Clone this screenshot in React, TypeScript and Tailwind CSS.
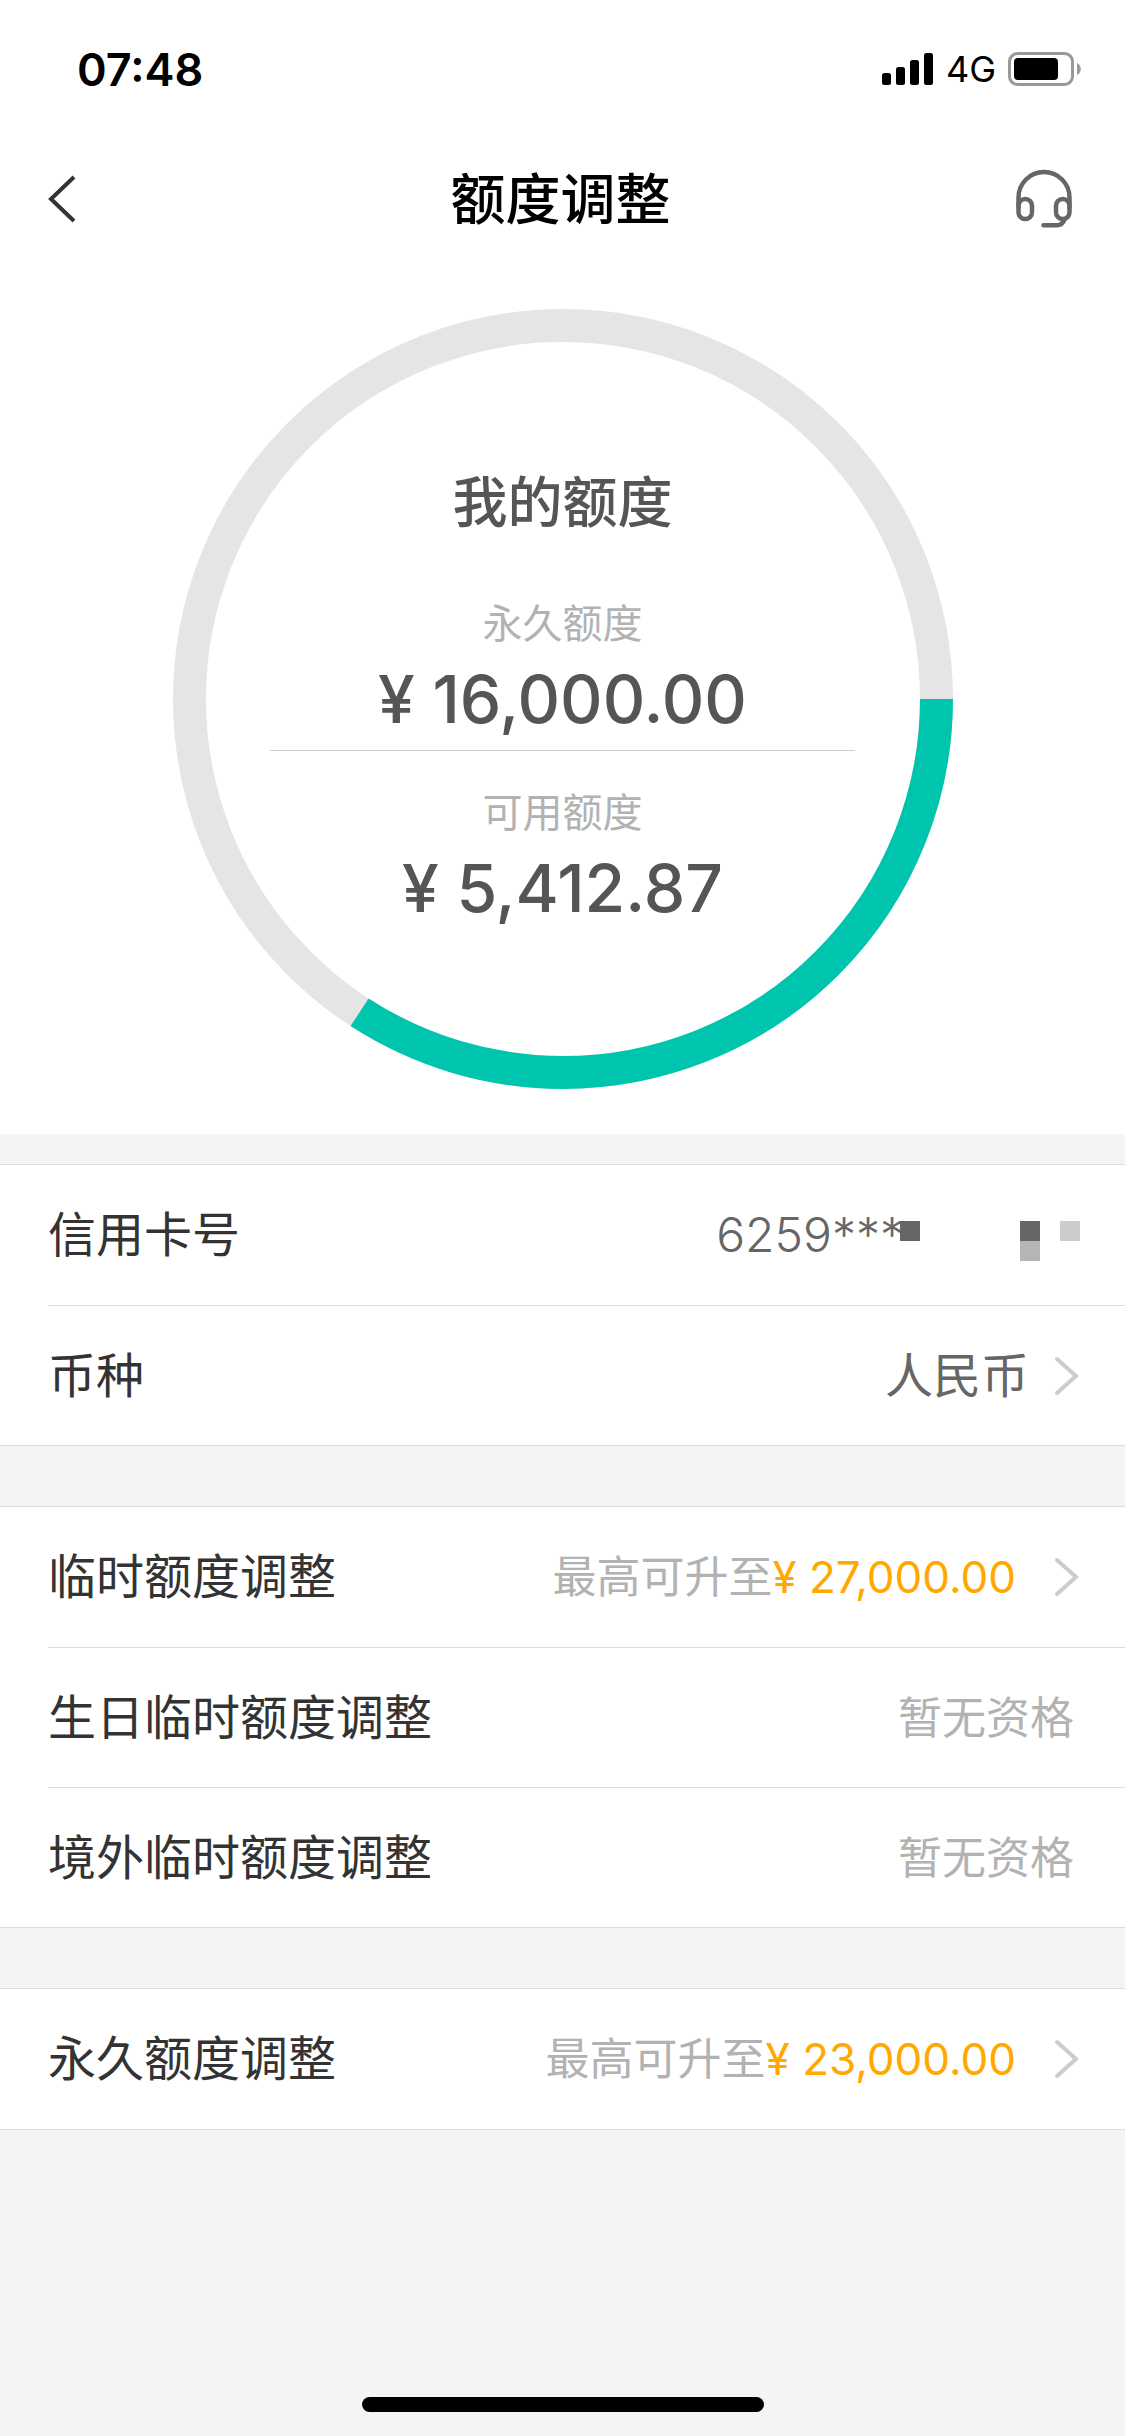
import type { ReactNode } from "react";

const mosaic = [
  "", "", "", "", "", "", "", "", "",
  "bg-[#666]", "", "", "", "", "", "bg-[#666]", "", "bg-[#ccc]",
  "", "", "", "", "", "", "bg-[#b5b5b5]", "", "",
];

const StatusBar = () => {
  return (
    <div className="flex h-[138px] items-center justify-between pr-[43px] pl-[77px] text-black">
      <span className="text-[45px] leading-none font-semibold">07:48</span>
      <div className="flex items-center gap-3">
        <svg width="52" height="34" viewBox="0 0 52 34" aria-hidden="true">
          <rect x="0" y="21" width="9" height="12" rx="2.5" />
          <rect x="14" y="15" width="9" height="18" rx="2.5" />
          <rect x="28" y="8" width="9" height="25" rx="2.5" />
          <rect x="42" y="1" width="9" height="32" rx="2.5" />
        </svg>
        <span className="text-[36px] leading-none">4G</span>
        <svg width="74" height="34" viewBox="0 0 74 34" aria-hidden="true">
          <rect
            x="1.5"
            y="1.5"
            width="63"
            height="31"
            rx="8"
            fill="none"
            stroke="#999"
            strokeWidth="3"
          />
          <rect x="6" y="6" width="44" height="22" rx="4" />
          <path d="M69 11c5 2 5 10 0 12z" fill="#999" />
        </svg>
      </div>
    </div>
  );
};

const Header = () => {
  return (
    <header className="flex h-[122px] items-center justify-between pr-[52px] pl-[48px]">
      <button type="button" aria-label="返回" className="w-[57px]">
        <svg width="30" height="50" viewBox="0 0 30 50" fill="none">
          <path d="M26 3 3 25l23 22" stroke="#333" strokeWidth="4" />
        </svg>
      </button>
      <h1 className="text-[55px] leading-none font-medium text-black">
        额度调整
      </h1>
      <button type="button" aria-label="客服">
        <svg
          width="57"
          height="60"
          viewBox="16 18 57 60"
          fill="none"
          stroke="#666"
          strokeWidth="4.5"
          strokeLinecap="round"
        >
          <path d="M18.5 56v-9.5a25.5 25.5 0 0 1 51 0V56" />
          <rect x="18.5" y="48" width="13.5" height="20" rx="6.7" />
          <rect x="56" y="48" width="13.5" height="20" rx="6.7" />
          <path d="M43.5 74.3H57q5.5 0 7.5-6" />
        </svg>
      </button>
    </header>
  );
};

const LimitRing = () => {
  return (
    <section className="grid justify-center pt-[49px] pb-[45px]">
      <svg
        className="col-start-1 row-start-1 w-[780px] max-w-full"
        viewBox="0 0 780 780"
        fill="none"
        strokeWidth="33"
        aria-hidden="true"
      >
        <circle cx="390" cy="390" r="373.5" stroke="#e5e5e5" />
        <circle
          cx="390"
          cy="390"
          r="373.5"
          stroke="#00c5ae"
          pathLength="360"
          strokeDasharray="123 360"
        />
      </svg>
      <div className="col-start-1 row-start-1 flex flex-col items-center pt-[166px] text-[#555]">
        <h2 className="text-[55px] leading-[54px] font-medium">我的额度</h2>
        <p className="mt-[75px] text-[40px] leading-[40px] text-[#b2b2b2]">
          永久额度
        </p>
        <p className="mt-5 text-[66px] leading-[70px] font-medium">
          ¥ 16,000.00
        </p>
        <hr className="mt-4 w-3/4 border-[#ccc]" />
        <p className="mt-[42px] text-[40px] leading-[40px] text-[#b2b2b2]">
          可用额度
        </p>
        <p className="mt-5 text-[66px] leading-[70px] font-medium">
          ¥ 5,412.87
        </p>
      </div>
    </section>
  );
};

const ArrowIcon = () => {
  return (
    <svg width="26" height="40" viewBox="0 0 26 40" fill="none" aria-hidden="true">
      <path
        d="M3 3l19 17L3 37"
        stroke="#ccc"
        strokeWidth="4"
        strokeLinecap="round"
      />
    </svg>
  );
};

const Group = ({ children }: { children: ReactNode }) => {
  return (
    <ul className="border-y border-[#dcdcdc] bg-white pl-12">{children}</ul>
  );
};

type RowProps = {
  label: string;
  link?: boolean;
  children: ReactNode;
};

const Row = ({ label, link, children }: RowProps) => {
  const content = (
    <>
      <span className="text-[48px] text-[#333]">{label}</span>
      <span className="flex items-center">{children}</span>
    </>
  );

  return (
    <li className="h-[140px] border-t border-[#dcdcdc] pr-[45px] first:border-t-0">
      {link ? (
        <a href="#" className="flex h-full items-center justify-between">
          {content}
        </a>
      ) : (
        <div className="flex h-full items-center justify-between">{content}</div>
      )}
    </li>
  );
};

const RaiseTo = ({ amount }: { amount: string }) => {
  return (
    <>
      <span className="text-[44px] text-[#b2b2b2]">最高可升至</span>
      <span className="mr-[38px] text-[44px] text-[#ffa900]">¥ {amount}</span>
      <ArrowIcon />
    </>
  );
};

const App = () => {
  return (
    <div className="flex min-h-screen flex-col bg-[#f4f4f4] font-['Inter','Noto_Sans_CJK_SC',sans-serif]">
      <div className="bg-white">
        <StatusBar />
        <Header />
        <LimitRing />
      </div>

      <main className="mt-[30px] flex flex-col gap-[60px]">
        <Group>
          <Row label="信用卡号">
            <span className="text-[48px] font-light text-[#666]">6259***</span>
            {/* hidden card digits */}
            <span className="relative -ml-1 grid grid-cols-9 bg-white pb-2">
              {mosaic.map((color, i) => (
                <span key={i} className={`size-5 ${color}`} />
              ))}
            </span>
          </Row>
          <Row label="币种" link>
            <span className="mr-[25px] text-[48px] text-[#666]">人民币</span>
            <ArrowIcon />
          </Row>
        </Group>

        <Group>
          <Row label="临时额度调整" link>
            <RaiseTo amount="27,000.00" />
          </Row>
          <Row label="生日临时额度调整">
            <span className="mr-1.5 text-[44px] text-[#b2b2b2]">暂无资格</span>
          </Row>
          <Row label="境外临时额度调整">
            <span className="mr-1.5 text-[44px] text-[#b2b2b2]">暂无资格</span>
          </Row>
        </Group>

        <Group>
          <Row label="永久额度调整" link>
            <RaiseTo amount="23,000.00" />
          </Row>
        </Group>
      </main>

      <div className="mx-auto mt-auto mb-6 h-[15px] w-[402px] rounded-full bg-black" />
    </div>
  );
};

export default App;
